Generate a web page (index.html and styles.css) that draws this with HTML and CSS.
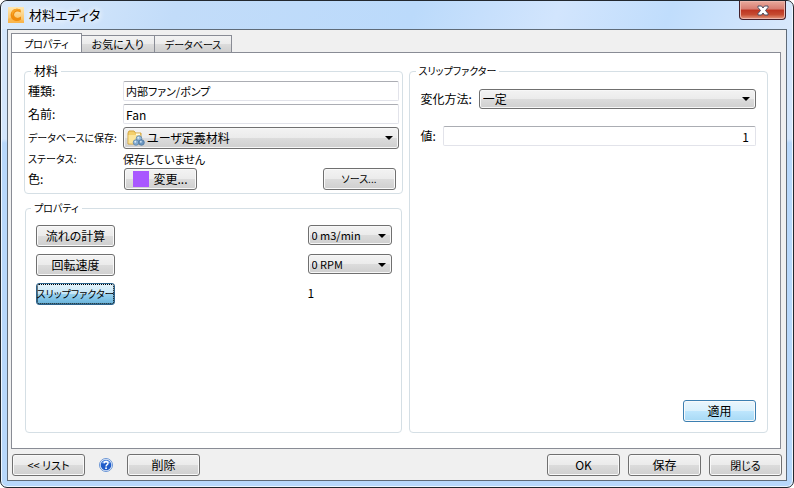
FILE: index.html
```html
<!DOCTYPE html>
<html lang="ja">
<head>
<meta charset="utf-8">
<title>材料エディタ</title>
<link rel="stylesheet" href="styles.css">
</head>
<body>
<main class="window">
  <header class="titlebar">
    <svg class="logo" width="16" height="16" viewBox="0 0 16 16" aria-hidden="true">
      <defs><linearGradient id="tile" x1="0" y1="0" x2="0" y2="1"><stop offset="0" stop-color="#ffe9b4"/><stop offset="1" stop-color="#f9ba55"/></linearGradient></defs>
      <rect width="16" height="16" fill="url(#tile)"/>
      <path d="M0 12L6 9L16 14V16H0Z" fill="#f9b044" opacity=".6"/>
      <path d="M13 5.500L12.300 2.600Q9 .8 5.800 2.500Q2.600 4.600 2.600 8Q2.800 12.500 7 13.800Q10.500 14.500 13 12.400V9.600Q10 11.500 7.800 10.600Q5.800 9.700 6 7.500Q6.400 5 8.800 4.600Q10.600 4.400 13 5.500Z" fill="#f08c0c"/>
      <path d="M5.800 2.500Q9 .8 12.300 2.600L12.600 4Q9.500 2.500 6.500 4.500Q4.500 6 4.600 9Q2 5 5.800 2.500Z" fill="#f7a529"/>
    </svg>
    <h1 class="title">材料エディタ</h1>
    <button class="close" type="button" aria-label="閉じる">
      <svg width="12" height="11" viewBox="0 0 12 11" aria-hidden="true"><path d="M1 1H4.500L6 3L7.500 1H11V2.500L8.500 5.500L11 8.500V10H7.500L6 8L4.500 10H1V8.500L3.500 5.500L1 2.500Z" fill="#fff" stroke="#4c5064"/></svg>
    </button>
  </header>

  <form class="client">
    <nav class="tabs" role="tablist">
      <button class="tab tab-active kana" type="button" role="tab" aria-selected="true">プロパティ</button>
      <button class="tab mixed" type="button" role="tab" aria-selected="false">お気に入り</button>
      <button class="tab kana" type="button" role="tab" aria-selected="false">データベース</button>
    </nav>

    <section class="panel">
      <div class="column">
        <fieldset class="group material">
          <legend>材料</legend>
          <label for="kind">種類:</label>
          <input class="field mixed" id="kind" type="text" value="内部ファン/ポンプ">
          <label for="name">名前:</label>
          <input class="field" id="name" type="text" value="Fan">
          <label class="kana" for="db">データベースに保存:</label>
          <span class="combo combo-icon">
            <svg class="folder" width="18" height="16" viewBox="0 0 18 16" aria-hidden="true">
              <path d="M1 14V3L2 1H7L8.500 3H14V14Z" fill="#f3cf6b" stroke="#d2a442"/>
              <path d="M1.500 5H13.500V13.500H1.500Z" fill="#fbe59c"/>
              <path d="M9 3.500H13V5H9Z" fill="#fffbe8"/>
              <circle cx="12" cy="8.500" r="2.800" fill="#94b8d8" stroke="#557fa8" stroke-width=".7"/>
              <circle cx="9" cy="12.500" r="2.800" fill="#84abd0" stroke="#557fa8" stroke-width=".7"/>
              <circle cx="14.500" cy="12.500" r="2.800" fill="#6b96c0" stroke="#456f9a" stroke-width=".7"/>
              <circle cx="11.300" cy="7.800" r="1" fill="#dcebf7"/><circle cx="8.300" cy="11.800" r="1" fill="#dcebf7"/><circle cx="13.800" cy="11.800" r="1" fill="#c9dff2"/>
            </svg>
            <select id="db"><option>ユーザ定義材料</option></select>
          </span>
          <span class="kana">ステータス:</span>
          <output class="mixed">保存していません</output>
          <span>色:</span>
          <div class="actions">
            <button class="button" type="button"><span class="swatch"></span>変更...</button>
            <button class="button kana" type="button">ソース...</button>
          </div>
        </fieldset>

        <fieldset class="group properties">
          <legend class="kana">プロパティ</legend>
          <div class="property">
            <button class="button button-wide" type="button">流れの計算</button>
            <span class="combo combo-small mixed"><select aria-label="流れの計算"><option>0 m3/min</option></select></span>
          </div>
          <div class="property">
            <button class="button button-wide" type="button">回転速度</button>
            <span class="combo combo-small mixed"><select aria-label="回転速度"><option>0 RPM</option></select></span>
          </div>
          <div class="property">
            <button class="button button-wide button-selected kana" type="button">スリップファクター</button>
            <output class="amount">1</output>
          </div>
        </fieldset>
      </div>

      <fieldset class="group factor">
        <legend class="kana">スリップファクター</legend>
        <div class="line">
          <label for="method">変化方法:</label>
          <span class="combo"><select id="method"><option>一定</option></select></span>
        </div>
        <div class="line">
          <label for="value">値:</label>
          <input class="field field-number" id="value" type="text" value="1">
        </div>
        <button class="button button-apply" type="button">適用</button>
      </fieldset>
    </section>

    <footer class="footer">
      <button class="button mixed" type="button">&lt;&lt; リスト</button>
      <button class="help" type="button" aria-label="ヘルプ">
        <svg width="14" height="14" viewBox="0 0 14 14" aria-hidden="true">
          <circle cx="7" cy="7" r="6.500" fill="#e9f1fc" stroke="#6a96d4"/>
          <circle cx="7" cy="7" r="5.300" fill="#1f5cc9"/>
          <path d="M2.500 5.500A4.800 4.800 0 0 1 11.500 5.500Q7 4 2.500 5.500Z" fill="#6fa0ea"/>
          <path d="M5 5.300Q5.200 3.500 7.100 3.500Q9.100 3.600 9 5.300Q8.900 6.300 7.900 6.900Q7.100 7.400 7.100 8.400" fill="none" stroke="#fff" stroke-width="1.500"/>
          <rect x="6.200" y="9.400" width="1.700" height="1.600" fill="#fff"/>
        </svg>
      </button>
      <button class="button" type="button">削除</button>
      <span class="spacer"></span>
      <button class="button" type="button">OK</button>
      <button class="button" type="button">保存</button>
      <button class="button mixed" type="button">閉じる</button>
    </footer>
  </form>
</main>
</body>
</html>
```
FILE: styles.css
```css
* {
  box-sizing: border-box;
}

body {
  margin: 0;
  background: #fff;
  color: #000;
  font: 12px/16px "Noto Sans CJK JP", sans-serif;
  font-feature-settings: "palt";
}

button, input, select {
  margin: 0;
  font: inherit;
  font-feature-settings: inherit;
  color: inherit;
}

.kana {
  font-size: 10px;
}

.mixed {
  font-size: 11px;
}

.window {
  display: flex;
  flex-direction: column;
  min-height: 100vh;
  padding: 0 6px 6px;
  border: 1px solid #22282f;
  border-radius: 7px;
  background: linear-gradient(180deg, #d3e6fc 0, #d3e6fc 138px, #b8d8fb 142px, #b8d8fb 100%);
  box-shadow: inset 0 0 0 1px #eef6ff;
}

.titlebar {
  display: flex;
  align-items: center;
  height: 28px;
  margin: 0 -5px;
  padding: 0 6px;
  background: linear-gradient(110deg, #dcebfc 0, #c2dcf9 22%, #bbdafb 52%, #d2e5fd 70%, #c0ddfc 84%, #d8e8fc 100%);
  border-radius: 6px 6px 0 0;
}

.title {
  flex: 1;
  margin: 0 0 0 5px;
  font-size: 13px;
  font-weight: 400;
  text-shadow: 0 0 6px #fff, 0 0 6px #fff;
}

.close {
  display: flex;
  align-items: center;
  justify-content: center;
  align-self: flex-start;
  width: 47px;
  height: 19px;
  padding: 0;
  border: 1px solid #43202a;
  border-top: 0;
  border-radius: 0 0 4px 4px;
  background: linear-gradient(180deg, #e9aa9d 0, #d77c70 45%, #bd3421 50%, #c64b31 75%, #e69a7f 100%);
  box-shadow: inset 0 0 0 1px #ecb5ab;
}

.client {
  display: flex;
  flex: 1;
  flex-direction: column;
  padding: 3px 4px 4px 3px;
  border: 1px solid #5f6b78;
  background: #f0f0f0;
}

.tabs {
  display: flex;
  align-items: flex-end;
  margin-bottom: -1px;
}

.tab {
  height: 18px;
  margin-left: -1px;
  padding: 0 10px;
  border: 1px solid #898c95;
  background: linear-gradient(180deg, #f3f3f3 0, #ebebeb 50%, #dcdcdc 50%, #cfcfcf 100%);
  line-height: 15px;
}

.tab-active {
  height: 20px;
  margin-left: 0;
  padding: 0 12px;
  border-bottom: 0;
  background: #fff;
  line-height: 18px;
}

.panel {
  display: grid;
  flex: 1;
  grid-template-columns: 378fr 359fr;
  gap: 6px;
  margin-right: 1px;
  padding: 10px 12px 15px;
  border: 1px solid #898c95;
  background: #fff;
}

.column {
  display: flex;
  flex-direction: column;
  gap: 6px;
}

.group {
  min-width: 0;
  margin: 0;
  padding: 0;
  border: 1px solid #d5dfe5;
  border-radius: 4px;
}

.group legend {
  margin-left: 5px;
  padding: 0 3px;
}

.material {
  display: grid;
  grid-template-columns: 95px 1fr;
  grid-template-rows: 20px 20px 22px 13px 22px;
  gap: 3px 0;
  align-items: center;
  padding: 2px 3px 3px;
}

.group.material legend {
  margin-left: 3px;
}

.material > label,
.material > span {
  white-space: nowrap;
}

.field {
  width: 100%;
  min-width: 0;
  height: 20px;
  padding: 0 2px;
  border: 1px solid #e2e3ea;
  border-top-color: #abadb3;
  border-radius: 2px;
  background: #fff;
}

.field-number {
  padding-right: 6px;
  text-align: right;
}

.combo {
  position: relative;
  display: flex;
  flex: 1;
}

.combo::after {
  position: absolute;
  top: 50%;
  right: 6px;
  margin-top: -2px;
  border: solid transparent;
  border-width: 4px 4px 0;
  border-top-color: #000;
  content: "";
  pointer-events: none;
}

.combo select {
  width: 100%;
  height: 20px;
  padding: 0 16px 0 3px;
  border: 1px solid #707070;
  border-radius: 3px;
  appearance: none;
  background: linear-gradient(180deg, #f3f3f3 0, #ebebeb 50%, #dcdcdc 50%, #cfcfcf 100%);
  box-shadow: inset 0 0 0 1px #f7f7f7;
  line-height: 16px;
}

.combo-icon select {
  height: 22px;
  padding-left: 23px;
}

.combo-small {
  flex: none;
  width: 84px;
}

.folder {
  position: absolute;
  top: 3px;
  left: 4px;
}

.actions {
  display: flex;
  justify-content: space-between;
  padding: 0 3px 0 1px;
}

.button {
  display: flex;
  align-items: center;
  justify-content: center;
  width: 73px;
  height: 22px;
  padding: 0;
  border: 1px solid #707070;
  border-radius: 3px;
  background: linear-gradient(180deg, #f3f3f3 0, #ebebeb 50%, #dcdcdc 50%, #cfcfcf 100%);
  box-shadow: inset 0 0 0 1px #f9f9f9;
  white-space: nowrap;
}

.button-wide {
  width: 79px;
}

.button-selected {
  border-color: #2c628b;
  outline: 1px dotted #000;
  outline-offset: -2px;
  background: linear-gradient(180deg, #e5f4fc 0, #c4e5f6 50%, #98d1ef 50%, #68b3db 100%);
  box-shadow: none;
}

.button-apply {
  align-self: flex-end;
  margin-top: auto;
  border-color: #3c7fb1;
  background: linear-gradient(180deg, #eaf6fd 0, #d9f0fc 50%, #bee6fd 50%, #a7d9f5 100%);
}

.swatch {
  width: 16px;
  height: 16px;
  margin-right: 4px;
  background: #a957ff;
}

.properties {
  flex: 1;
  margin: 0 1px;
}

.property {
  display: flex;
  justify-content: space-between;
  padding: 0 9px 7px 10px;
}

.properties legend + .property {
  margin-top: 9px;
}

.amount {
  width: 84px;
  line-height: 20px;
}

.factor {
  display: flex;
  flex-direction: column;
  padding: 10px 11px;
}

.group.factor legend {
  margin-left: -5px;
}

.line {
  display: flex;
  align-items: center;
  gap: 7px;
  margin-bottom: 17px;
}

.footer {
  display: flex;
  gap: 8px;
  align-items: center;
  padding: 5px 0 0 1px;
}

.help {
  display: flex;
  margin: 0 6px;
  padding: 0;
  border: 0;
  background: none;
}

.spacer {
  flex: 1;
}
```
